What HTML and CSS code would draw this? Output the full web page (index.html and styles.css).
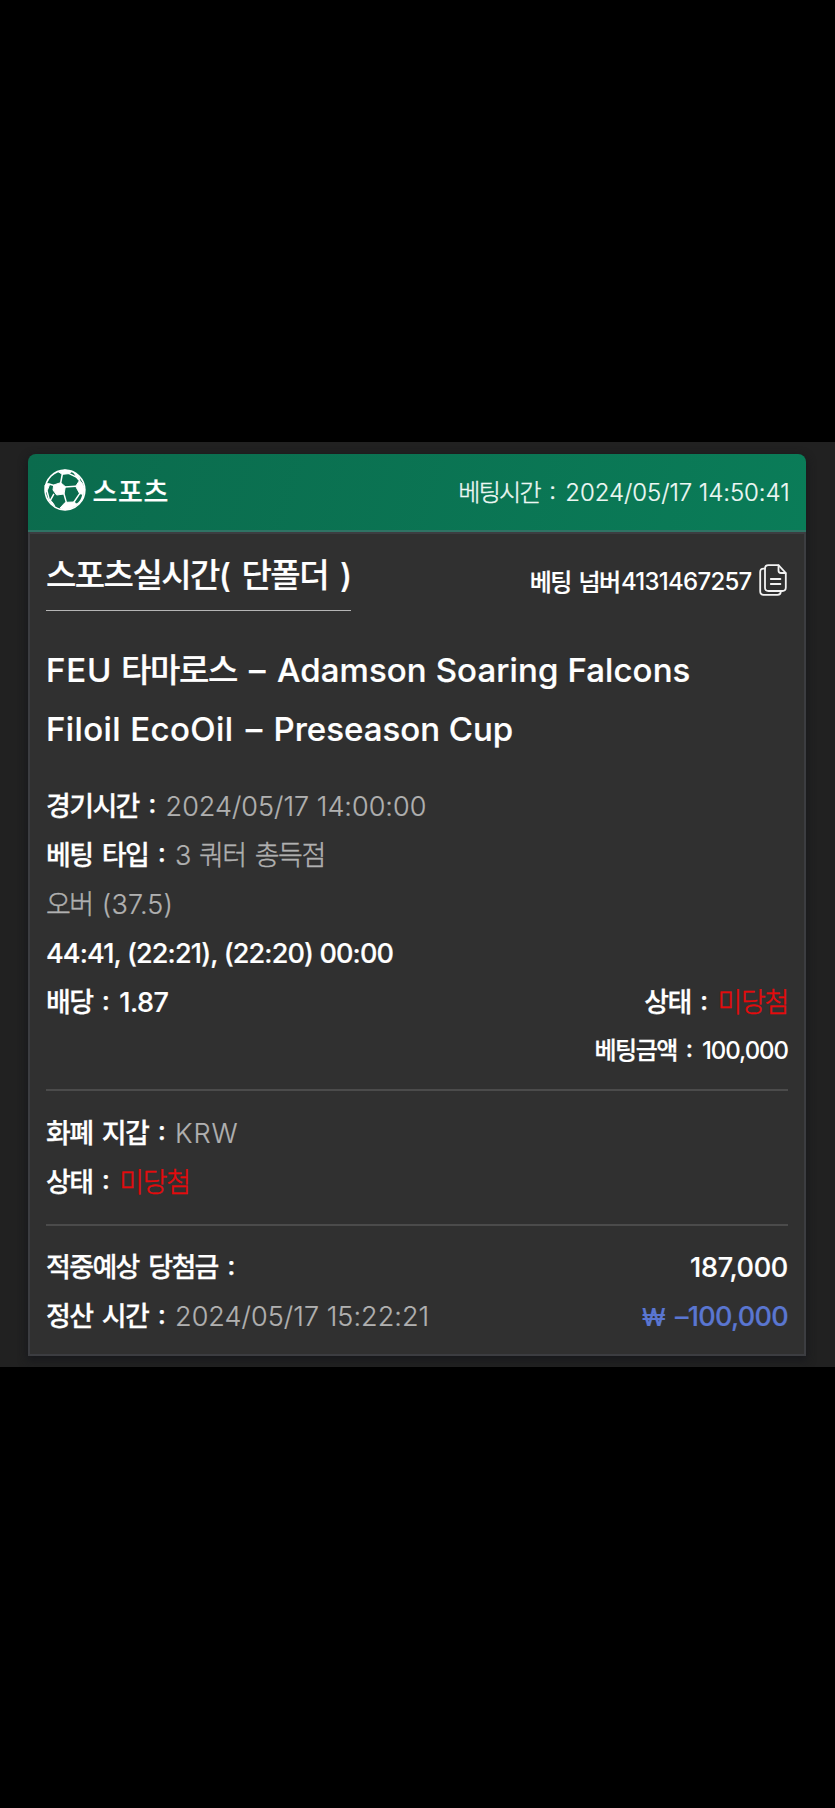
FILE: index.html
```html
<!DOCTYPE html>
<html lang="ko">
<head>
<meta charset="utf-8">
<title>스포츠</title>
<link rel="stylesheet" href="styles.css">
</head>
<body>
<main class="panel">
  <article class="card">
    <header class="card-head">
      <div class="brand">
        <svg class="ball" viewBox="0 0 126 126">
          <circle cx="63" cy="63" r="59.5" fill="none" stroke="#fff" stroke-width="5"/>
          <g fill="#fff" stroke="#fff" stroke-width="3" stroke-linejoin="round">
            <path d="M50 41 64 53 60 75 38 78 27 63 29 48Z"/>
            <path d="M44 9 62 3 84 7 74 14 55 16Z"/>
            <path d="M95 52 107 34 116 45 122 62 117 76 107 74Z"/>
            <path d="M3 48 10 43 17 46 10 64 4 72Z"/>
            <path d="M64 100 90 99 99 106 84 118 64 122 48 117Z"/>
            <path d="M15 91 24 98 32 110 22 104Z"/>
            <path d="M90 12 104 22 108 32 98 24Z"/>
          </g>
          <g fill="none" stroke="#fff" stroke-width="4.5" stroke-linecap="round">
            <path d="M50 42 55 15M74 13 97 24 107 35M62 54 95 52M60 75 67 100M29 76 19 94M28 49 15 45M107 74 90 99M117 76C115 90 108 100 98 107M16 93 9 66"/>
          </g>
        </svg>
        <span class="brand-name">스포츠</span>
      </div>
      <div class="bet-time"><span class="ko">베팅시간 <i class="colon">:</i></span><span class="stamp">2024/05/17 14:50:41</span></div>
    </header>
    <div class="card-body">
      <div class="title-row">
        <h1 class="title">스포츠실시간( 단폴더 )</h1>
        <div class="bet-no"><span class="bet-no-label">베팅 넘버</span><span class="bet-no-value">4131467257</span>
          <svg class="copy" viewBox="0 0 28 32" fill="none" stroke="#f2f2f2" stroke-width="1.8" stroke-linejoin="round" stroke-linecap="round">
            <path d="M9.5 1.2H19.5L26.8 9V23.5Q26.8 27 23.3 27H9.5Q6 27 6 23.5V4.7Q6 1.2 9.5 1.2Z"/>
            <path d="M19.5 1.5V6.5Q19.5 9 22 9H26.5M6 4.6H4.7Q1.2 4.6 1.2 8.1V27.3Q1.2 30.8 4.7 30.8H18.5Q21.8 30.8 21.8 27.5M11.8 15H21.4M11.8 20H21.4"/>
          </svg>
        </div>
      </div>
      <section class="match">
        <p><span class="m-feu">FEU</span> <span class="m-ko">타마로스</span> <span class="dash">–</span> <span class="m-away">Adamson Soaring Falcons</span></p>
        <p><span class="m-league">Filoil EcoOil</span> <span class="dash">–</span> Preseason Cup</p>
      </section>
      <section class="rows">
        <p class="row"><span><b class="label">경기시간 <i class="colon">:</i></b><span class="value">2024/05/17 14:00:00</span></span></p>
        <p class="row"><span><b class="label">베팅 타입 <i class="colon">:</i></b><span class="value">3 <span class="ko">쿼터 총득점</span></span></span></p>
        <p class="row"><span class="value"><span class="ko">오버 </span><span class="line">(37.5)</span></span></p>
        <p class="row"><b class="score">44:41, (22:21), (22:20) 00:00</b></p>
        <p class="row"><span><b class="label">배당 <i class="colon">:</i></b><b class="odds">1.87</b></span><span><b class="label">상태 <i class="colon">:</i></b><span class="lost">미당첨</span></span></p>
        <p class="row stake"><span><b class="label">베팅금액 <i class="colon">:</i></b><b class="stake-value">100,000</b></span></p>
      </section>
      <section class="rows ruled">
        <p class="row"><span><b class="label">화폐 지갑 <i class="colon">:</i></b><span class="value krw">KRW</span></span></p>
        <p class="row"><span><b class="label">상태 <i class="colon">:</i></b><span class="lost">미당첨</span></span></p>
      </section>
      <section class="rows ruled">
        <p class="row"><b class="label">적중예상 당첨금 <i class="colon">:</i></b><b class="win">187,000</b></p>
        <p class="row"><span><b class="label">정산 시간 <i class="colon">:</i></b><span class="value settled">2024/05/17 15:22:21</span></span><b class="loss"><span class="won">₩</span>–100,000</b></p>
      </section>
    </div>
  </article>
</main>
</body>
</html>
```
FILE: styles.css
```css
* { box-sizing: border-box; margin: 0; padding: 0; }
body {
  height: 1808px;
  padding-top: 442px;
  background: #000;
  color: #fff;
  font-family: Inter, "Noto Sans CJK KR", sans-serif;
  font-feature-settings: "calt" 0;
  white-space: nowrap;
}
b { font-weight: 500; }
i { font-style: normal; }
.panel { height: 925px; padding: 11.5px 29px 0 28px; background: #212121; overflow: hidden; }
.card { height: 902.5px; border-radius: 8px 8px 0 0; box-shadow: 0 3px 9px 1px #17181c; }
.card-head {
  display: flex; justify-content: space-between; align-items: center;
  height: 78.5px;
  padding: 0 16.5px 2px 16px;
  border-bottom: 2px solid #2f7364;
  border-radius: 8px 8px 0 0;
  background: linear-gradient(105deg, #0b6b4d, #0a7c58);
}
.brand { display: flex; align-items: center; }
.ball { width: 42px; height: 42px; margin-top: -2px; }
.brand-name { margin-left: 6.5px; font-size: 27px; font-weight: 500; letter-spacing: .6px; -webkit-text-stroke: .2px; }
.bet-time { font-size: 24px; font-weight: 300; color: #eef8f4; -webkit-text-stroke: .2px; }
.bet-time .ko { letter-spacing: -1.7px; word-spacing: 4.3px; -webkit-text-stroke: .4px; }
.stamp { margin-left: 11px; letter-spacing: -.08px; }
.colon { display: inline-block; line-height: 1; vertical-align: 2.5px; }
.card-body { height: 824px; padding: 0 16px; border: 2px solid #3c3d41; background: #303030; }
.title-row { display: flex; justify-content: space-between; align-items: flex-start; height: 106.5px; padding-top: 17px; }
.title {
  height: 59.5px; line-height: 48px;
  border-bottom: 1.5px solid #b5b5b5;
  font-size: 33px; font-weight: 500; letter-spacing: -1.55px; word-spacing: 4.8px;
  -webkit-text-stroke: .2px;
}
.bet-no { display: flex; align-items: center; height: 60px; font-size: 24px; font-weight: 500; }
.bet-no-label { margin-top: -1px; letter-spacing: -1.6px; word-spacing: 3px; -webkit-text-stroke: .2px; }
.bet-no-value { margin-left: 1.5px; letter-spacing: -.75px; }
.copy { width: 28px; height: 32px; margin: -2px 1px 0 7.5px; }
.match { font-size: 33px; font-weight: 500; line-height: 59px; -webkit-text-stroke: .2px; }
.m-feu { letter-spacing: .8px; }
.m-ko { letter-spacing: -1.4px; }
.m-away { letter-spacing: .1px; }
.m-league { letter-spacing: .4px; }
.dash { margin: 0 2.6px 0 3.4px; }
.rows { font-size: 27px; line-height: 49.15px; }
.match + .rows { padding-top: 23px; }
.row { display: flex; justify-content: space-between; }
.label { margin-right: 10.8px; letter-spacing: -1.65px; word-spacing: 3.9px; -webkit-text-stroke: .25px; }
.value { font-weight: 300; color: #b0b0b0; -webkit-text-stroke: .2px; }
.value .ko { letter-spacing: -1.5px; word-spacing: 3px; -webkit-text-stroke: .4px; }
.line { letter-spacing: .2px; }
.krw { letter-spacing: 1px; }
.settled { letter-spacing: .04px; }
.score { letter-spacing: -.86px; -webkit-text-stroke: .2px; }
.odds { letter-spacing: -.5px; -webkit-text-stroke: .2px; }
.lost { font-weight: 300; letter-spacing: -1.3px; color: #e60a0c; -webkit-text-stroke: .4px; }
.stake { justify-content: flex-end; padding-top: 1px; font-size: 24px; line-height: 45.4px; }
.stake .label { margin-right: 10.5px; letter-spacing: -1.5px; }
.stake-value { letter-spacing: -1.05px; }
.ruled { margin-top: 15.5px; padding-top: 17.4px; border-top: 2px solid #4b4b4b; }
.ruled + .ruled { margin-top: 17px; }
.win { letter-spacing: -.3px; -webkit-text-stroke: .2px; }
.loss { letter-spacing: -.7px; color: #5a76d0; -webkit-text-stroke: .2px; }
.won { margin-right: 10px; font-size: 24px; }
```
